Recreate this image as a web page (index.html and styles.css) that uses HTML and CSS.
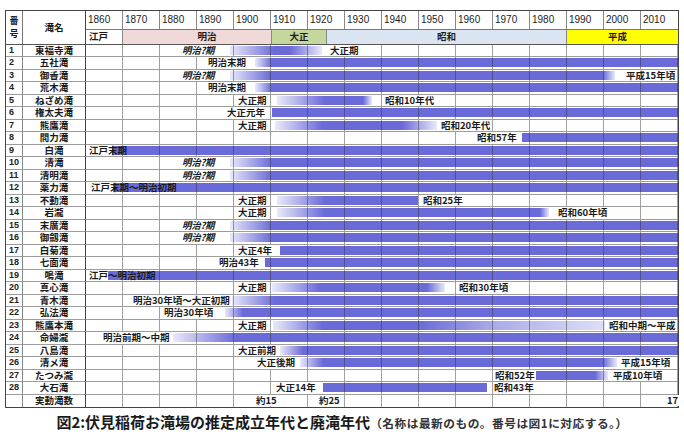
FILE: index.html
```html
<!DOCTYPE html>
<html lang="ja">
<head>
<meta charset="utf-8">
<title>伏見稲荷お滝場</title>
<link rel="stylesheet" href="styles.css">
</head>
<body>
<div class="chart">
  <div class="head">
    <div class="hnum"><span>番</span><span>号</span></div>
    <div class="hname">滝名</div>
    <div class="years">
      <div class="yr">1860</div><div class="yr">1870</div><div class="yr">1880</div><div class="yr">1890</div>
      <div class="yr">1900</div><div class="yr">1910</div><div class="yr">1920</div><div class="yr">1930</div>
      <div class="yr">1940</div><div class="yr">1950</div><div class="yr">1960</div><div class="yr">1970</div>
      <div class="yr">1980</div><div class="yr">1990</div><div class="yr">2000</div><div class="yr">2010</div>
    </div>
    <div class="eras">
      <div class="era edo">江戸</div>
      <div class="era meiji">明治</div>
      <div class="era taisho">大正</div>
      <div class="era showa">昭和</div>
      <div class="era heisei">平成</div>
    </div>
  </div>

  <div class="row"><div class="num">1</div><div class="name">東福寺滝</div><div class="tl">
    <span class="lbl it" style="left:95px">明治?期</span>
    <span class="bar in" style="left:144px;width:45px"></span><span class="bar" style="left:189px;width:15px"></span><span class="bar out" style="left:204px;width:32px"></span>
    <span class="lbl" style="left:243px">大正期</span></div></div>

  <div class="row"><div class="num">2</div><div class="name">五社滝</div><div class="tl">
    <span class="lbl" style="left:121px">明治末期</span>
    <span class="bar in" style="left:169px;width:17px"></span><span class="bar" style="left:186px;width:406px"></span></div></div>

  <div class="row"><div class="num">3</div><div class="name">御香滝</div><div class="tl">
    <span class="lbl it" style="left:95px">明治?期</span>
    <span class="bar in" style="left:144px;width:41px"></span><span class="bar" style="left:185px;width:332px"></span><span class="bar out" style="left:517px;width:12px"></span>
    <span class="lbl" style="left:539px">平成15年頃</span></div></div>

  <div class="row"><div class="num">4</div><div class="name">荒木滝</div><div class="tl">
    <span class="lbl" style="left:121px">明治末期</span>
    <span class="bar in" style="left:169px;width:17px"></span><span class="bar" style="left:186px;width:406px"></span></div></div>

  <div class="row"><div class="num">5</div><div class="name">ねざめ滝</div><div class="tl">
    <span class="lbl" style="left:151px">大正期</span>
    <span class="bar in" style="left:191px;width:48px"></span><span class="bar" style="left:239px;width:38px"></span><span class="bar out" style="left:277px;width:9px"></span>
    <span class="lbl" style="left:298px">昭和10年代</span></div></div>

  <div class="row"><div class="num">6</div><div class="name">権太夫滝</div><div class="tl">
    <span class="lbl" style="left:140px">大正元年</span>
    <span class="bar" style="left:186px;width:406px"></span></div></div>

  <div class="row"><div class="num">7</div><div class="name">熊鷹滝</div><div class="tl">
    <span class="lbl" style="left:151px">大正期</span>
    <span class="bar in" style="left:189px;width:48px"></span><span class="bar" style="left:237px;width:79px"></span><span class="bar out" style="left:316px;width:35px"></span>
    <span class="lbl" style="left:354px">昭和20年代</span></div></div>

  <div class="row"><div class="num">8</div><div class="name">間力滝</div><div class="tl">
    <span class="lbl" style="left:390px">昭和57年</span>
    <span class="bar" style="left:436px;width:156px"></span></div></div>

  <div class="row"><div class="num">9</div><div class="name">白滝</div><div class="tl">
    <span class="bar" style="left:26px;width:566px"></span>
    <span class="lbl clear" style="left:2px">江戸末期</span></div></div>

  <div class="row"><div class="num">10</div><div class="name">清滝</div><div class="tl">
    <span class="lbl it" style="left:95px">明治?期</span>
    <span class="bar in" style="left:144px;width:42px"></span><span class="bar" style="left:186px;width:406px"></span></div></div>

  <div class="row"><div class="num">11</div><div class="name">清明滝</div><div class="tl">
    <span class="lbl it" style="left:95px">明治?期</span>
    <span class="bar in" style="left:144px;width:42px"></span><span class="bar" style="left:186px;width:406px"></span></div></div>

  <div class="row"><div class="num">12</div><div class="name">薬力滝</div><div class="tl">
    <span class="bar" style="left:27px;width:565px"></span>
    <span class="lbl clear" style="left:4px">江戸末期〜明治初期</span></div></div>

  <div class="row"><div class="num">13</div><div class="name">不動滝</div><div class="tl">
    <span class="lbl" style="left:151px">大正期</span>
    <span class="bar in" style="left:191px;width:48px"></span><span class="bar" style="left:239px;width:93px"></span>
    <span class="lbl" style="left:336px">昭和25年</span></div></div>

  <div class="row"><div class="num">14</div><div class="name">岩瀧</div><div class="tl">
    <span class="lbl" style="left:151px">大正期</span>
    <span class="bar in" style="left:191px;width:48px"></span><span class="bar" style="left:239px;width:215px"></span><span class="bar out" style="left:454px;width:9px"></span>
    <span class="lbl" style="left:471px">昭和60年頃</span></div></div>

  <div class="row"><div class="num">15</div><div class="name">末廣滝</div><div class="tl">
    <span class="lbl it" style="left:95px">明治?期</span>
    <span class="bar in" style="left:144px;width:42px"></span><span class="bar" style="left:186px;width:406px"></span></div></div>

  <div class="row"><div class="num">16</div><div class="name">御劔滝</div><div class="tl">
    <span class="lbl it" style="left:95px">明治?期</span>
    <span class="bar in" style="left:144px;width:42px"></span><span class="bar" style="left:186px;width:406px"></span></div></div>

  <div class="row"><div class="num">17</div><div class="name">白菊滝</div><div class="tl">
    <span class="lbl" style="left:151px">大正4年</span>
    <span class="bar" style="left:194px;width:398px"></span></div></div>

  <div class="row"><div class="num">18</div><div class="name">七面滝</div><div class="tl">
    <span class="lbl" style="left:132px">明治43年</span>
    <span class="bar" style="left:179px;width:413px"></span></div></div>

  <div class="row"><div class="num">19</div><div class="name">鳴滝</div><div class="tl">
    <span class="bar" style="left:22px;width:570px"></span>
    <span class="lbl clear" style="left:2px">江戸〜明治初期</span></div></div>

  <div class="row"><div class="num">20</div><div class="name">真心滝</div><div class="tl">
    <span class="lbl" style="left:151px">大正期</span>
    <span class="bar in" style="left:186px;width:48px"></span><span class="bar" style="left:234px;width:107px"></span><span class="bar out" style="left:341px;width:18px"></span>
    <span class="lbl" style="left:372px">昭和30年頃</span></div></div>

  <div class="row"><div class="num">21</div><div class="name">青木滝</div><div class="tl">
    <span class="lbl" style="left:46px">明治30年頃〜大正初期</span>
    <span class="bar in" style="left:146px;width:43px"></span><span class="bar" style="left:189px;width:403px"></span></div></div>

  <div class="row"><div class="num">22</div><div class="name">弘法滝</div><div class="tl">
    <span class="lbl" style="left:77px">明治30年頃</span>
    <span class="bar in" style="left:139px;width:18px"></span><span class="bar" style="left:157px;width:435px"></span></div></div>

  <div class="row"><div class="num">23</div><div class="name">熊鷹本滝</div><div class="tl">
    <span class="lbl" style="left:151px">大正期</span>
    <span class="bar in" style="left:187px;width:50px"></span><span class="bar" style="left:237px;width:95px"></span><span class="bar out long" style="left:332px;width:187px"></span>
    <span class="lbl" style="left:522px">昭和中期〜平成</span></div></div>

  <div class="row"><div class="num">24</div><div class="name">命婦瀧</div><div class="tl">
    <span class="lbl" style="left:16px">明治前期〜中期</span>
    <span class="bar in" style="left:87px;width:63px"></span><span class="bar" style="left:150px;width:442px"></span></div></div>

  <div class="row"><div class="num">25</div><div class="name">八島滝</div><div class="tl">
    <span class="lbl" style="left:151px">大正前期</span>
    <span class="bar in" style="left:194px;width:23px"></span><span class="bar" style="left:217px;width:375px"></span></div></div>

  <div class="row"><div class="num">26</div><div class="name">清メ滝</div><div class="tl">
    <span class="lbl" style="left:170px">大正後期</span>
    <span class="bar in" style="left:214px;width:23px"></span><span class="bar" style="left:237px;width:280px"></span><span class="bar out" style="left:517px;width:14px"></span>
    <span class="lbl" style="left:534px">平成15年頃</span></div></div>

  <div class="row"><div class="num">27</div><div class="name">たつみ瀧</div><div class="tl">
    <span class="lbl" style="left:408px">昭和52年</span>
    <span class="bar" style="left:450px;width:59px"></span><span class="bar out" style="left:509px;width:13px"></span>
    <span class="lbl" style="left:526px">平成10年頃</span></div></div>

  <div class="row"><div class="num">28</div><div class="name">大石滝</div><div class="tl">
    <span class="lbl" style="left:189px">大正14年</span>
    <span class="bar" style="left:237px;width:164px"></span>
    <span class="lbl" style="left:407px">昭和43年</span></div></div>

  <div class="row last"><div class="num"></div><div class="name">実動滝数</div><div class="tl">
    <span class="lbl" style="left:169px">約15</span>
    <span class="lbl" style="left:232px">約25</span>
    <span class="lbl" style="left:580px">17</span></div></div>
</div>
<p class="caption"><span class="cap-main">図2:伏見稲荷お滝場の推定成立年代と廃滝年代</span><span class="cap-note">（名称は最新のもの。番号は図1に対応する。）</span></p>
</body>
</html>
```

FILE: styles.css
```css
* { box-sizing: border-box; }

body {
  margin: 0;
  background: #fff;
  color: #1a1a1a;
  font-family: "Noto Sans CJK JP", "Noto Sans", sans-serif;
}

.chart {
  margin: 10px 0 0 5px;
  width: 674px;
  border: 1px solid #444;
}

.head {
  display: grid;
  grid-template-columns: 17px 63px 592px;
  grid-template-rows: 19px 13.5px;
  border-bottom: 1px solid #555;
}

.hnum {
  grid-row: 1 / 3;
  border-right: 1px solid #777;
  display: flex;
  flex-direction: column;
  align-items: center;
  justify-content: center;
  font-size: 9px;
  line-height: 13px;
  font-weight: bold;
}

.hname {
  grid-row: 1 / 3;
  border-right: 1.5px solid #444;
  display: flex;
  align-items: center;
  justify-content: center;
  font-size: 9.5px;
  font-weight: bold;
}

.years {
  display: flex;
  border-bottom: 1px solid #777;
}

.yr {
  width: 37px;
  border-right: 1px solid #888;
  padding-left: 2px;
  font-family: "Liberation Sans", sans-serif;
  font-size: 10px;
  line-height: 18px;
  color: #222;
}

.yr:last-child { border-right: none; }

.eras { display: flex; }

.era {
  border-right: 1px solid #888;
  font-size: 9.5px;
  font-weight: bold;
  line-height: 13.5px;
  text-align: center;
}

.era:last-child { border-right: none; }

.edo { width: 37px; text-align: left; padding-left: 3px; }
.meiji { width: 149px; background: #f1d9d9; padding-left: 20px; }
.taisho { width: 55px; background: #c4d79c; }
.showa { width: 240px; background: #dbe5f1; }
.heisei { width: 111px; background: #ffff00; padding-right: 10px; }

.row {
  display: grid;
  grid-template-columns: 17px 63px 592px;
  height: 12.5px;
}

.row > div { border-bottom: 1px solid #9c9c9c; }
.row.last > div { border-bottom: none; }

.num {
  border-right: 1px solid #888;
  padding-left: 3px;
  font-family: "Liberation Sans", sans-serif;
  font-size: 9px;
  font-weight: bold;
  line-height: 11.5px;
  color: #222;
}

.name {
  border-right: 1.5px solid #444;
  text-align: center;
  font-size: 9.5px;
  font-weight: bold;
  line-height: 11.5px;
  white-space: nowrap;
}

.tl { position: relative; }

.tl::after {
  content: "";
  position: absolute;
  inset: 0;
  background: repeating-linear-gradient(90deg, transparent 0 17.8px, rgba(45, 45, 45, 0.45) 17.8px 18.5px);
  z-index: 1;
  pointer-events: none;
}

.bar {
  position: absolute;
  top: 1.25px;
  height: 9px;
  background: #6a6ad8;
}

.bar.in { background: linear-gradient(90deg, #e9e9fa, #6a6ad8); }
.bar.out { background: linear-gradient(90deg, #6a6ad8, #e9e9fa); }
.bar.out.long { background: linear-gradient(90deg, #6a6ad8, #aaaae8 40%, #dedef6); }

.lbl {
  position: absolute;
  top: 0;
  z-index: 2;
  padding: 0 1px;
  background: #fff;
  font-size: 9.5px;
  font-weight: bold;
  line-height: 11.5px;
  white-space: nowrap;
  color: #1a1a1a;
}

.lbl.clear { background: transparent; }
.lbl.it { font-style: italic; letter-spacing: -0.3px; }

.caption {
  margin: 4px 0 0;
  width: 684px;
  text-align: center;
  line-height: 18px;
  white-space: nowrap;
}

.cap-main {
  font-size: 15px;
  font-weight: bold;
}

.cap-note {
  font-size: 11.7px;
  font-weight: bold;
  letter-spacing: 0.5px;
  color: #333;
}
```
